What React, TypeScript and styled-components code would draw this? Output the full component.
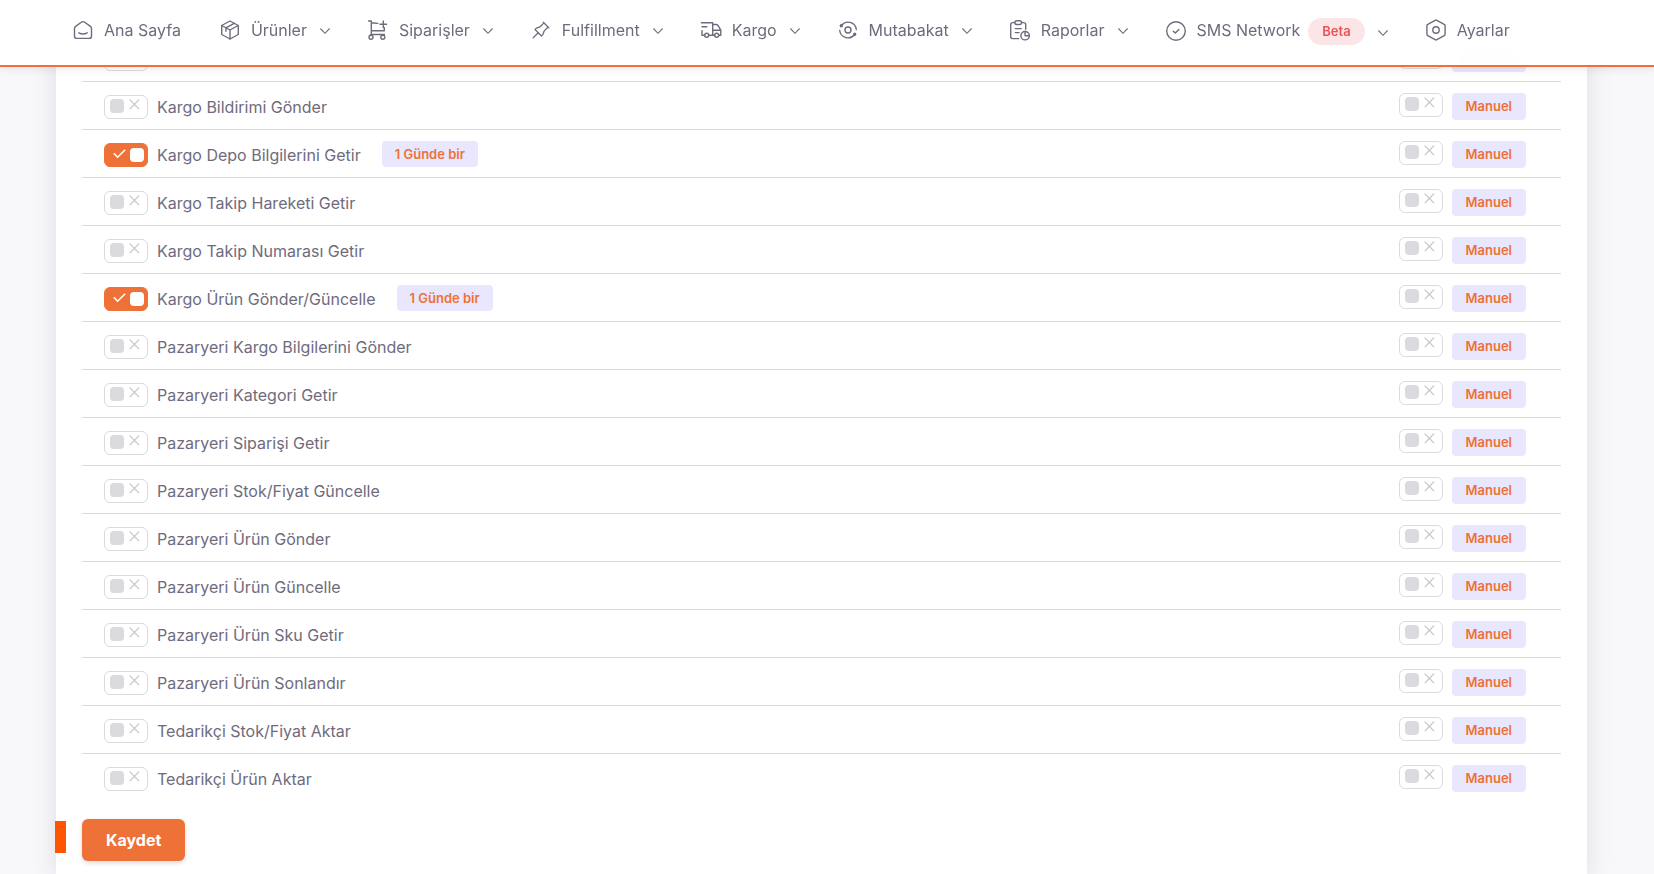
import React, { useState } from 'react';
import styled, { createGlobalStyle, css } from 'styled-components';

const color = {
  primary: '#ee7137',
  line: '#dbdade',
  text: '#6f6b7d',
  lilac: '#e9e7fd',
  page: '#f8f7fa',
};

const GlobalStyle = createGlobalStyle`
  *, *::before, *::after { box-sizing: border-box; }
  body {
    margin: 0;
    background: ${color.page};
    color: ${color.text};
    font-family: Inter, "Liberation Sans", sans-serif;
    font-size: 16px;
    line-height: 24px;
  }
`;

/* ---------- top navigation ---------- */

const Header = styled.header`
  position: fixed;
  inset: 0 0 auto 0;
  z-index: 10;
  height: 67px;
  padding: 0 72px;
  border-bottom: 2px solid ${color.primary};
  background: rgba(255, 255, 255, 0.97);
  backdrop-filter: blur(6px);
  box-shadow: 0 2px 8px rgba(75, 70, 92, 0.12);
`;

const Menu = styled.ul`
  display: flex;
  align-items: center;
  gap: 34px;
  margin: 0;
  padding: 16px 0 0;
  list-style: none;
`;

const entry = css`
  display: flex;
  align-items: center;
  height: 28px;
  padding: 0;
  border: 0;
  background: none;
  color: inherit;
  font: inherit;
  white-space: nowrap;
  text-decoration: none;
  cursor: pointer;
`;

const MenuLink = styled.a`
  ${entry}
  gap: 10px;
  padding-right: 4px;
`;

const MenuButton = styled.button`
  ${entry}
  gap: 10px;
`;

const Icon = styled.svg`
  flex: none;
  width: 22px;
  height: 22px;
  fill: none;
  stroke: currentColor;
  stroke-width: 1.4;
  stroke-linecap: round;
  stroke-linejoin: round;
`;

const Chevron = styled.svg`
  flex: none;
  width: 16px;
  height: 16px;
  fill: none;
  stroke: currentColor;
  stroke-width: 1.1;
  margin-top: 2px;
`;

const BetaBadge = styled.span`
  padding: 0 14px;
  border-radius: 14px;
  background: #fce5e6;
  color: #ea5455;
  font-size: 13px;
  font-weight: 600;
  line-height: 27px;
  margin: 3px 0 0 -2px;

  & + ${Chevron} {
    margin-top: 6px;
  }
`;

const icons: Record<string, React.ReactNode> = {
  home: (
    <>
      <path d="M2.5 9.6c0-.9.4-1.7 1.1-2.2l5.700-4.200c1-.7 2.400-.7 3.400 0l5.700 4.200c.7.5 1.100 1.300 1.100 2.200v7.300c0 1.400-1 2.500-2.400 2.500H4.900c-1.400 0-2.400-1.100-2.400-2.500z" />
      <path d="M6.8 13.800c2.300 1.300 6.100 1.300 8.400 0" />
    </>
  ),
  box: (
    <>
      <path d="M11 2 19.300 6.500v9L11 20l-8.300-4.500v-9z" />
      <path d="M11 11v9M11 11 2.700 6.500M11 11l8.300-4.500M15.200 4.300 6.900 8.800v3.500" />
    </>
  ),
  trolley: (
    <>
      <path d="M1.600 2h2.700v13.500M4.300 3.800l6.500.6M16.300 2v6.600M13 5.300h6.600M17.300 8.600v3.200H4.300M3.600 15.500h13.800" />
      <circle cx="4" cy="18.300" r="2" />
      <circle cx="15.800" cy="18.300" r="2" />
    </>
  ),
  pin: (
    <g transform="scale(.9167)">
      <path d="M15 4.500l-4 4l-4 1.500l-1.500 1.500l7 7l1.500 -1.500l1.500 -4l4 -4" />
      <path d="M9 15l-5.500 5.500M14.500 3.500l6 6" />
    </g>
  ),
  truck: (
    <>
      <path d="M1.400 3.800H12.700V16.200H8.700M12.700 5.500h3.200c1 0 1.700.3 2.200 1.100l2.700 4.600v5h-2M12.700 11.200h8M2 7.800h4.800M2 11.800v4.400h2.700M12.700 16.200h2" />
      <circle cx="6.700" cy="16.200" r="2" />
      <circle cx="16.700" cy="16.200" r="2" />
    </>
  ),
  cycle: (
    <>
      <circle cx="11" cy="11" r="3" />
      <path d="M4.400 6.500A8.300 8.300 0 0 1 19.300 10.500M17.600 15.500A8.300 8.300 0 0 1 2.700 11.500" />
      <circle cx="4.300" cy="6.800" r="1" fill="currentColor" />
      <circle cx="17.700" cy="15.200" r="1" fill="currentColor" />
    </>
  ),
  report: (
    <>
      <path d="M5.800 3.600H3.700c-1.200 0-2 .8-2 2v12c0 1.200.8 2 2 2h6M12.600 3.600h2.100c1.200 0 2 .8 2 2v4.600M6.300 9.600h6M6.300 13.600h3.800" />
      <rect x="5.800" y="1.700" width="6.800" height="3.800" rx="1.900" />
      <circle cx="16.100" cy="16.700" r="4.200" />
      <path d="M16.100 12.500v4.200h4.200" />
    </>
  ),
  check: (
    <>
      <circle cx="11" cy="12" r="9.300" />
      <path d="M8.300 12.200l2 1.900 3.600-3.700" />
    </>
  ),
  settings: (
    <>
      <path d="M10.100 1.300c.5-.3 1.300-.3 1.800 0l7.300 4c.6.300.9.900.9 1.500v8.400c0 .6-.3 1.200-.9 1.500l-7.300 4c-.5.300-1.300.300-1.800 0l-7.300-4c-.6-.3-.9-.9-.9-1.500V6.800c0-.6.3-1.200.9-1.500z" />
      <circle cx="11" cy="11" r="3.200" />
    </>
  ),
};

interface MenuEntry {
  label: string;
  icon: string;
  submenu?: boolean;
  beta?: boolean;
}

const menu: MenuEntry[] = [
  { label: 'Ana Sayfa', icon: 'home' },
  { label: 'Ürünler', icon: 'box', submenu: true },
  { label: 'Siparişler', icon: 'trolley', submenu: true },
  { label: 'Fulfillment', icon: 'pin', submenu: true },
  { label: 'Kargo', icon: 'truck', submenu: true },
  { label: 'Mutabakat', icon: 'cycle', submenu: true },
  { label: 'Raporlar', icon: 'report', submenu: true },
  { label: 'SMS Network', icon: 'check', submenu: true, beta: true },
  { label: 'Ayarlar', icon: 'settings' },
];

function MenuItem({ label, icon, submenu, beta }: MenuEntry) {
  const glyph = (
    <Icon viewBox="0 0 22 22" overflow="visible" aria-hidden="true">
      {icons[icon]}
    </Icon>
  );
  if (!submenu) {
    return (
      <li>
        <MenuLink href="#">
          {glyph}
          {label}
        </MenuLink>
      </li>
    );
  }
  return (
    <li>
      <MenuButton type="button" aria-haspopup="true">
        {glyph}
        <span>{label}</span>
        {beta && <BetaBadge>Beta</BetaBadge>}
        <Chevron viewBox="0 0 16 16" aria-hidden="true">
          <path d="M3.400 5.500 8 10.300l4.600-4.800" />
        </Chevron>
      </MenuButton>
    </li>
  );
}

/* ---------- integration settings ---------- */

const Page = styled.main`
  display: flex;
  min-height: 100vh;
  padding: 0 67px 0 56px;
`;

const Card = styled.form`
  flex: 1;
  min-width: 0;
  padding: 34px 26px 13px;
  background: #fff;
  box-shadow: 0 4px 24px rgba(75, 70, 92, 0.14);
`;

const TaskList = styled.ul`
  margin: 0;
  padding: 0;
  list-style: none;
`;

const TaskRow = styled.li`
  display: flex;
  justify-content: space-between;
  height: 48px;
  padding: 11px 35px 0 22px;
  border-bottom: 1px solid ${color.line};

  &:last-child {
    border-bottom-color: transparent;
  }
`;

const AutoSide = styled.div`
  display: flex;
  align-items: center;
  gap: 9px;
  height: 28px;
`;

const ManualSide = styled.div`
  display: flex;
  align-items: flex-start;
  gap: 9px;
`;

const Badge = styled.span<{ $compact?: boolean }>`
  align-self: flex-start;
  padding: 0 ${(p) => (p.$compact ? 13 : 14)}px;
  margin-left: ${(p) => (p.$compact ? 12 : 0)}px;
  border-radius: 4px;
  background: ${color.lilac};
  color: ${color.primary};
  font-size: 13px;
  font-weight: 600;
  line-height: ${(p) => (p.$compact ? 26 : 27)}px;
`;

const SwitchBox = styled.span`
  position: relative;
  display: block;
  flex: none;
  width: 44px;
  height: 24px;
`;

const SwitchInput = styled.input`
  appearance: none;
  display: block;
  width: 44px;
  height: 24px;
  margin: 0;
  padding: 3px 5px;
  border: 1px solid ${color.line};
  border-radius: 6px;
  background: #fff;
  cursor: pointer;

  &::before {
    content: '';
    display: block;
    width: 14px;
    height: 14px;
    border-radius: 4px;
    background: ${color.line};
  }

  &:checked {
    padding: 4px 3px 4px 25px;
    border-color: ${color.primary};
    background: ${color.primary};
  }

  &:checked::before {
    background: #fff;
  }
`;

const SwitchMark = styled.svg<{ $on: boolean }>`
  position: absolute;
  top: ${(p) => (p.$on ? 3 : 2)}px;
  left: ${(p) => (p.$on ? 8 : 23)}px;
  width: 15px;
  height: 15px;
  fill: none;
  stroke: ${(p) => (p.$on ? '#fff' : '#c4c2ca')};
  stroke-width: ${(p) => (p.$on ? 1.6 : 1.2)};
  pointer-events: none;
`;

const Actions = styled.div`
  position: relative;
  padding-top: 17px;
`;

const Marker = styled.span`
  position: absolute;
  top: 19px;
  left: -27px;
  width: 11px;
  height: 32px;
  background: #ff5500;
`;

const SaveButton = styled.button`
  display: block;
  height: 42px;
  padding: 0 24px;
  border: 0;
  border-radius: 6px;
  background: ${color.primary};
  box-shadow: 0 2px 4px rgba(75, 70, 92, 0.2);
  color: #fff;
  font: inherit;
  font-weight: 700;
  cursor: pointer;
`;

function Switch({ id, label, initial = false }: { id: string; label?: string; initial?: boolean }) {
  const [on, setOn] = useState(initial);
  return (
    <SwitchBox>
      <SwitchInput
        type="checkbox"
        role="switch"
        id={id}
        aria-label={label}
        checked={on}
        onChange={(e) => setOn(e.target.checked)}
      />
      <SwitchMark $on={on} viewBox="0 0 15 15" aria-hidden="true">
        <path d={on ? 'M1.800 7.300 5.600 11.200 13.200 3.700' : 'M2.700 2.700l9.400 9.400M12.100 2.700l-9.400 9.400'} />
      </SwitchMark>
    </SwitchBox>
  );
}

interface Task {
  name: string;
  schedule?: string;
}

const tasks: Task[] = [
  { name: '' },
  { name: 'Kargo Bildirimi Gönder' },
  { name: 'Kargo Depo Bilgilerini Getir', schedule: '1 Günde bir' },
  { name: 'Kargo Takip Hareketi Getir' },
  { name: 'Kargo Takip Numarası Getir' },
  { name: 'Kargo Ürün Gönder/Güncelle', schedule: '1 Günde bir' },
  { name: 'Pazaryeri Kargo Bilgilerini Gönder' },
  { name: 'Pazaryeri Kategori Getir' },
  { name: 'Pazaryeri Siparişi Getir' },
  { name: 'Pazaryeri Stok/Fiyat Güncelle' },
  { name: 'Pazaryeri Ürün Gönder' },
  { name: 'Pazaryeri Ürün Güncelle' },
  { name: 'Pazaryeri Ürün Sku Getir' },
  { name: 'Pazaryeri Ürün Sonlandır' },
  { name: 'Tedarikçi Stok/Fiyat Aktar' },
  { name: 'Tedarikçi Ürün Aktar' },
];

export default function App() {
  return (
    <>
      <GlobalStyle />
      <Header>
        <nav>
          <Menu>
            {menu.map((item) => (
              <MenuItem key={item.label} {...item} />
            ))}
          </Menu>
        </nav>
      </Header>
      <Page>
        <Card onSubmit={(e) => e.preventDefault()}>
          <TaskList>
            {tasks.map(({ name, schedule }, i) => (
              <TaskRow key={i}>
                <AutoSide>
                  <Switch id={`auto-${i}`} label={name ? undefined : 'Kargo'} initial={Boolean(schedule)} />
                  <label htmlFor={`auto-${i}`}>{name}</label>
                  {schedule && <Badge $compact>{schedule}</Badge>}
                </AutoSide>
                <ManualSide>
                  <Switch id={`manual-${i}`} label={`${name} Manuel`} />
                  <Badge>Manuel</Badge>
                </ManualSide>
              </TaskRow>
            ))}
          </TaskList>
          <Actions>
            <Marker />
            <SaveButton type="submit">Kaydet</SaveButton>
          </Actions>
        </Card>
      </Page>
    </>
  );
}
